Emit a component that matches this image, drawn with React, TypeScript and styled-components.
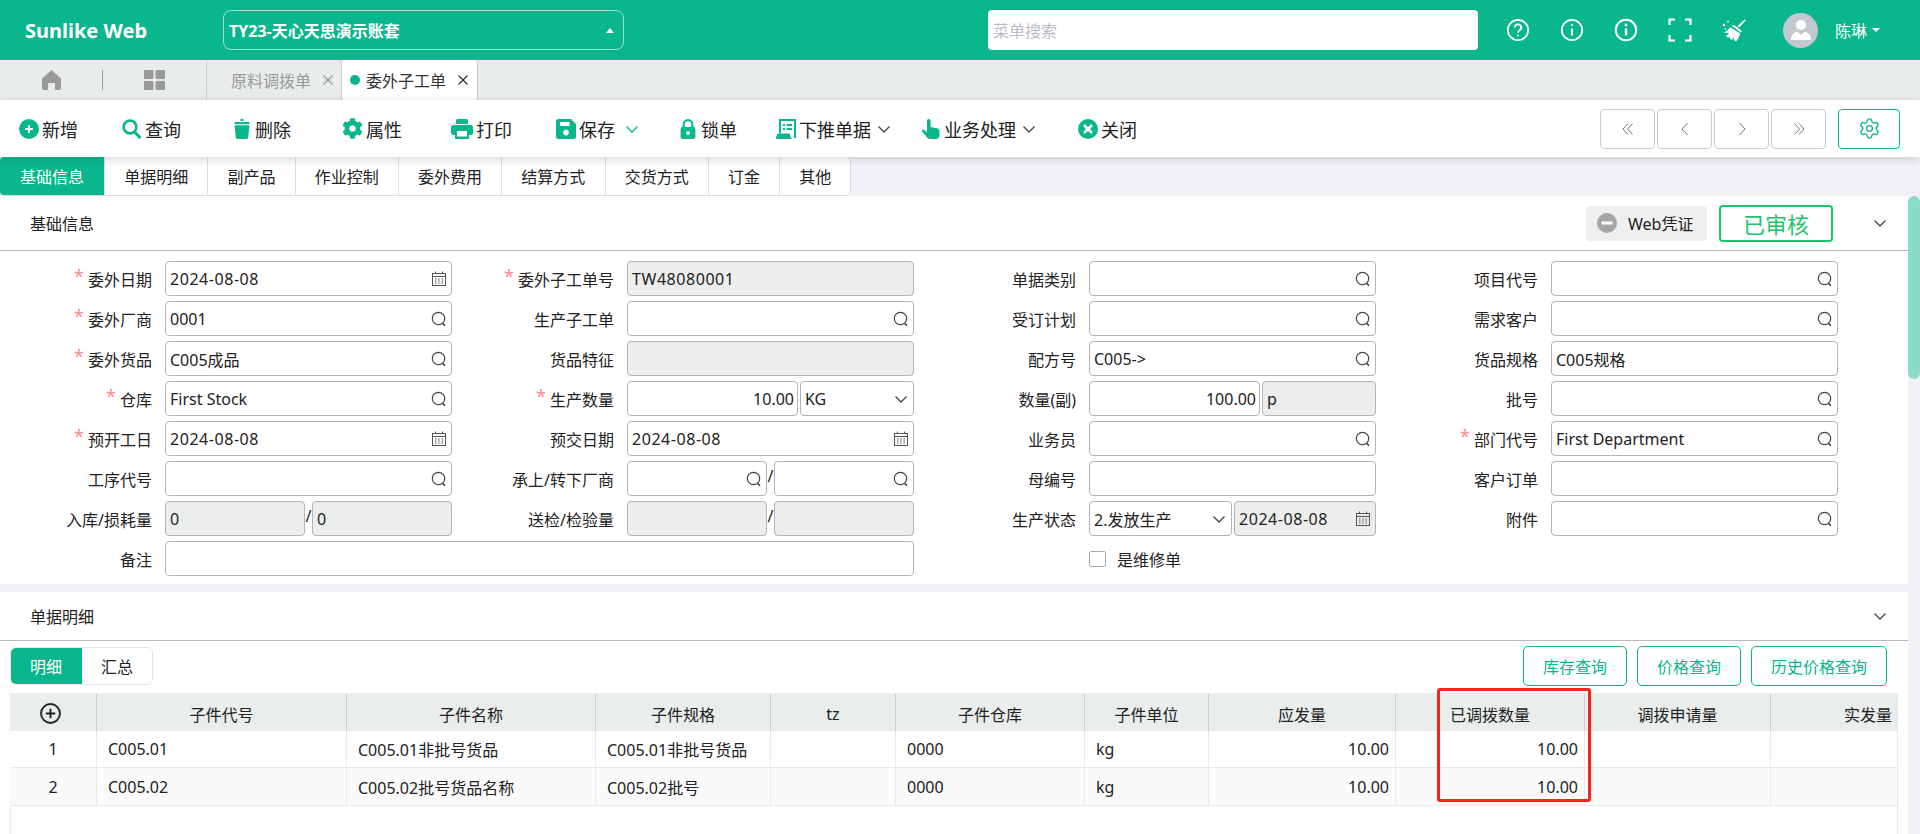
import { FC, ReactNode } from 'react'
import styled, { createGlobalStyle } from 'styled-components'
import { Settings } from 'lucide-react'
import { FaCog } from 'react-icons/fa'

const GREEN = '#0ab68b'

const GlobalStyle = createGlobalStyle`
  html, body {
    margin: 0;
    padding: 0;
    background: #f0f2f5;
  }
  * {
    box-sizing: border-box;
  }
  body {
    font-family: "Noto Sans", "Noto Sans CJK SC", sans-serif;
    font-size: 16px;
    color: #222;
  }
`

/* ---------- small drawings ---------- */

const Chevron: FC<{ color?: string }> = ({ color = '#444' }) => (
  <svg width="16" height="16" viewBox="0 0 16 16" fill="none" stroke={color} strokeWidth="1.3">
    <polyline points="2.5,5.5 8,11 13.5,5.5" />
  </svg>
)

const CloseX: FC<{ color: string }> = ({ color }) => (
  <svg width="10" height="10" viewBox="0 0 10 10" stroke={color} strokeWidth="1.2">
    <line x1="0.5" y1="0.5" x2="9.5" y2="9.5" />
    <line x1="9.5" y1="0.5" x2="0.5" y2="9.5" />
  </svg>
)

const SearchIcon = () => (
  <svg width="16" height="16" viewBox="0 0 16 16" fill="none" stroke="#444" strokeWidth="1.2">
    <circle cx="7.5" cy="7.5" r="6.2" />
    <line x1="11.6" y1="12.4" x2="14" y2="14.6" strokeWidth="1.5" />
  </svg>
)

const CalendarIcon = () => (
  <svg width="16" height="16" viewBox="0 0 16 16" fill="none" stroke="#555" strokeWidth="1">
    <rect x="1.5" y="2.5" width="13" height="12" />
    <line x1="1.5" y1="5.5" x2="14.5" y2="5.5" />
    <line x1="4.5" y1="0.5" x2="4.5" y2="3" />
    <line x1="11.5" y1="0.5" x2="11.5" y2="3" />
    <path d="M4 8h1.5M7.2 8h1.5M10.5 8h1.5M4 10h1.5M7.2 10h1.5M10.5 10h1.5M4 12h1.5M7.2 12h1.5M10.5 12h1.5" />
  </svg>
)

const PagerIcon: FC<{ d: string }> = ({ d }) => (
  <svg width="16" height="16" viewBox="0 0 16 16" fill="none" stroke="#777" strokeWidth="1">
    <path d={d} />
  </svg>
)

const ToolIcons: Record<string, ReactNode> = {
  add: (
    <svg width="20" height="20" viewBox="0 0 20 20">
      <circle cx="10" cy="10" r="10" fill={GREEN} />
      <path d="M6.2 10h7.6M10 6.2v7.6" stroke="#fff" strokeWidth="2" />
    </svg>
  ),
  search: (
    <svg width="20" height="20" viewBox="0 0 20 20" fill="none" stroke={GREEN}>
      <circle cx="8" cy="8" r="6.4" strokeWidth="2.6" />
      <line x1="12.6" y1="13" x2="18.4" y2="19" strokeWidth="3.2" />
    </svg>
  ),
  trash: (
    <svg width="20" height="20" viewBox="0 0 20 20" fill={GREEN}>
      <rect x="8.4" y="0" width="3.4" height="2" rx="0.8" />
      <rect x="2.4" y="3" width="15.2" height="2.2" rx="1" />
      <path d="M2.6 6.2h14.8l-1.2 12.4a1.6 1.6 0 0 1-1.6 1.4H5.4a1.6 1.6 0 0 1-1.6-1.4z" />
    </svg>
  ),
  gear: <FaCog size={21} color={GREEN} />,
  print: (
    <svg width="22" height="20" viewBox="0 0 22 20">
      <path d="M5 1.5a1.5 1.5 0 0 1 1.5-1.5h9A1.5 1.5 0 0 1 17 1.5V5H5z" fill={GREEN} />
      <rect x="0" y="6" width="22" height="10" rx="2.5" fill={GREEN} />
      <rect x="4" y="10.5" width="14" height="9.5" rx="1" fill={GREEN} />
      <rect x="6" y="12" width="10" height="5.5" fill="#fff" />
    </svg>
  ),
  save: (
    <svg width="20" height="20" viewBox="0 0 20 20">
      <path d="M2.5 0h12.5l5 5v12.5a2.5 2.5 0 0 1-2.5 2.5h-15A2.5 2.5 0 0 1 0 17.5v-15A2.5 2.5 0 0 1 2.5 0z" fill={GREEN} />
      <rect x="4" y="3" width="9.5" height="4" fill="#fff" />
      <circle cx="10" cy="13.6" r="2.8" fill="#fff" />
    </svg>
  ),
  lock: (
    <svg width="20" height="20" viewBox="0 0 20 20">
      <path d="M5.6 9V5.6a4.4 4.4 0 0 1 8.8 0V9" fill="none" stroke={GREEN} strokeWidth="2.2" />
      <rect x="2.6" y="8" width="14.8" height="12" rx="2" fill={GREEN} />
      <circle cx="10" cy="14" r="2" fill="#fff" />
    </svg>
  ),
  push: (
    <svg width="20" height="20" viewBox="0 0 20 20">
      <path d="M4 14.5V1h15v18" fill="none" stroke={GREEN} strokeWidth="2" />
      <path d="M7 5h2v2H7zM7 9h2v2H7zM10.5 5H16v2h-5.5zM10.5 9H16v2h-5.5z" fill={GREEN} />
      <path d="M0 20c0-3 1-5 2.5-5.5H14c0 2 .5 4 2 5.500z" fill={GREEN} />
    </svg>
  ),
  hand: (
    <svg width="20" height="20" viewBox="0 0 20 20" fill={GREEN}>
      <path d="M6 1.8a1.8 1.8 0 0 1 3.6 0V8l6.400 1.300c1.500.3 2.500 1.300 2.500 2.800V16c0 2.500-1.500 4-4 4H9c-1.500 0-2.300-.6-3-1.700l-4.800-5.800c-.8-1.200.8-2.800 2-1.600L6 13.200z" />
    </svg>
  ),
  close: (
    <svg width="20" height="20" viewBox="0 0 20 20">
      <circle cx="10" cy="10" r="10" fill={GREEN} />
      <path d="M6 6l8 8M14 6l-8 8" stroke="#fff" strokeWidth="2.6" />
    </svg>
  ),
}

/* ---------- top bar ---------- */

const TopBar = styled.header`
  display: flex;
  align-items: center;
  height: 60px;
  padding-left: 25px;
  background: ${GREEN};
  color: #fff;
`
const Logo = styled.div`
  width: 198px;
  font-size: 20px;
  font-weight: 700;
`
const AccountSelect = styled.div`
  display: flex;
  align-items: center;
  justify-content: space-between;
  width: 401px;
  height: 40px;
  padding: 0 9px 0 5px;
  border: 1px solid rgba(255, 255, 255, 0.6);
  border-radius: 8px;
  font-weight: 700;
`
const Caret = styled.i<{ $up?: boolean }>`
  display: inline-block;
  border-left: 4.5px solid transparent;
  border-right: 4.5px solid transparent;
  ${(p) => (p.$up ? 'border-bottom: 5px solid #fff;' : 'border-top: 4px solid #fff;')}
`
const MenuSearch = styled.div`
  display: flex;
  align-items: center;
  width: 490px;
  height: 40px;
  margin-left: 364px;
  padding-left: 5px;
  border-radius: 4px;
  background: #fff;
  color: #b8bcc4;
`
const HeaderIcons = styled.div`
  display: flex;
  margin-left: 13px;
`
const HeaderIcon = styled.span`
  display: flex;
  align-items: center;
  justify-content: center;
  width: 54px;
  height: 24px;
`
const Avatar = styled.span`
  display: flex;
  align-items: center;
  justify-content: center;
  width: 35px;
  height: 35px;
  margin-left: 22px;
  border-radius: 50%;
  background: #c3c8d0;
`
const UserName = styled.span`
  display: flex;
  align-items: center;
  gap: 5px;
  margin-left: 17px;
`

/* ---------- open document tabs ---------- */

const TabBar = styled.nav`
  display: flex;
  align-items: stretch;
  height: 40px;
  background: #e8ecea;
`
const HomeSlot = styled.div`
  display: flex;
  align-items: center;
  width: 206px;
  padding-left: 42px;
`
const Divider = styled.span`
  width: 1px;
  height: 20px;
  margin: 0 41px;
  background: #999;
`
const DocTab = styled.div<{ $active?: boolean }>`
  display: flex;
  align-items: center;
  width: ${(p) => (p.$active ? 136 : 136)}px;
  padding-left: ${(p) => (p.$active ? 8 : 24)}px;
  border-left: ${(p) => (p.$active ? 'none' : '1px solid #ccc')};
  border-right: 1px solid #ccc;
  border-radius: 4px 4px 0 0;
  background: ${(p) => (p.$active ? '#fff' : 'transparent')};
  color: ${(p) => (p.$active ? '#333' : '#999')};
`
const TabDot = styled.i`
  width: 10px;
  height: 10px;
  margin-right: 6px;
  border-radius: 50%;
  background: ${GREEN};
`
const TabClose = styled.span`
  display: flex;
  margin-left: 12px;
`

/* ---------- toolbar ---------- */

const Toolbar = styled.div`
  position: relative;
  z-index: 2;
  display: flex;
  align-items: center;
  height: 57px;
  padding: 0 20px 0 19px;
  background: #fff;
  box-shadow: 0 2px 8px rgba(40, 44, 60, 0.2);
`
const ToolButton = styled.button<{ $offset: number }>`
  display: flex;
  align-items: center;
  gap: 3px;
  height: 40px;
  margin-left: ${(p) => p.$offset}px;
  padding: 0;
  border: 0;
  background: none;
  color: #222;
  font: inherit;
  font-size: 18px;
`
const ToolChevron = styled.span<{ $gap: number }>`
  display: flex;
  margin-left: ${(p) => p.$gap}px;
`
const Pager = styled.div`
  display: flex;
  gap: 2px;
  margin-left: auto;
`
const PagerButton = styled.button`
  display: flex;
  align-items: center;
  justify-content: center;
  width: 55px;
  height: 40px;
  padding: 0;
  border: 1px solid #ccc;
  border-radius: 4px;
  background: #fff;
`
const GearButton = styled(PagerButton)`
  width: 62px;
  margin-left: 12px;
  border-color: ${GREEN};
`

/* ---------- section tabs ---------- */

const SectionTabs = styled.div`
  display: flex;
  height: 39px;
  padding-bottom: 1px;
`
const SectionTabList = styled.div`
  display: flex;
  border-radius: 4px;
  box-shadow: 0 0 0 1px #dcdee2;
  overflow: hidden;
`
const SectionTab = styled.div<{ $active?: boolean }>`
  display: flex;
  align-items: center;
  padding: 0 ${(p) => (p.$active ? '20px' : '19.15px')};
  border-right: 1px solid #dcdee2;
  background: ${(p) => (p.$active ? GREEN : '#fff')};
  color: ${(p) => (p.$active ? '#fff' : '#222')};
  &:last-child {
    border-right: 0;
  }
`

/* ---------- scroll area ---------- */

const Body = styled.div`
  display: flex;
  height: 638px;
  overflow: hidden;
`
const Content = styled.main`
  display: flex;
  flex-direction: column;
  gap: 8px;
  width: 1908px;
`
const ScrollTrack = styled.div`
  width: 12px;
`
const ScrollThumb = styled.div`
  height: 183px;
  border-radius: 6px;
  background: #8adcc4;
`

const Card = styled.section<{ $grow?: boolean }>`
  display: flex;
  flex-direction: column;
  background: #fff;
  ${(p) => p.$grow && 'flex: 1; min-height: 0;'}
`
const CardHeader = styled.div<{ $height: number }>`
  display: flex;
  align-items: center;
  flex: none;
  height: ${(p) => p.$height}px;
  padding: 0 20px 0 30px;
  border-bottom: 1px solid #b8b8b8;
`
const VoucherBadge = styled.div`
  display: flex;
  align-items: center;
  gap: 11px;
  width: 121px;
  height: 35px;
  margin-left: auto;
  padding-left: 11px;
  border-radius: 4px;
  background: #efefef;
`
const StatusStamp = styled.div`
  display: flex;
  align-items: center;
  justify-content: center;
  width: 114px;
  height: 37px;
  margin-left: 12px;
  border: 2px solid #1cc46c;
  border-radius: 4px;
  color: #1cc46c;
  font-size: 22px;
`
const HeaderChevron = styled.span<{ $auto?: boolean }>`
  display: flex;
  margin-left: ${(p) => (p.$auto ? 'auto' : '39px')};
`

/* ---------- form ---------- */

const Form = styled.div`
  display: grid;
  grid-template-columns: repeat(4, 462px);
  grid-auto-rows: 35px;
  row-gap: 5px;
  padding: 10px 0 8px;
`
const FormItem = styled.div<{ $span?: number }>`
  display: grid;
  grid-template-columns: 152px 1fr;
  column-gap: 13px;
  align-items: center;
  width: ${(p) => (p.$span === 2 ? 914 : 452)}px;
  ${(p) => p.$span === 2 && 'grid-column: span 2;'}
`
const Label = styled.div`
  padding-top: 1px;
  text-align: right;
  white-space: nowrap;
`
const Req = styled.span`
  position: relative;
  top: -3px;
  margin-right: 4px;
  color: #fb8a8a;
  font-size: 18px;
  line-height: 1;
`
const FieldRow = styled.div<{ $first: number }>`
  display: grid;
  grid-template-columns: ${(p) => p.$first}px 1fr;
  column-gap: 2px;
  height: 35px;
`
const SlashRow = styled.div`
  display: grid;
  grid-template-columns: 1fr 7px 1fr;
  height: 35px;
`
const Slash = styled.span`
  text-align: center;
  line-height: 30px;
`
const Field = styled.div<{ $disabled?: boolean; $right?: boolean; $wide?: boolean }>`
  display: flex;
  align-items: center;
  justify-content: space-between;
  height: 35px;
  min-width: 0;
  padding: 1px 4px 0 4px;
  border: 1px solid #b4b4b4;
  border-radius: 4px;
  background: ${(p) => (p.$disabled ? '#eceeed' : '#fff')};
  letter-spacing: ${(p) => (p.$wide ? '0.55px' : 'normal')};
  ${(p) => p.$right && 'justify-content: flex-end; padding-right: 3px;'}
`
const CheckRow = styled.div`
  display: flex;
  align-items: center;
  gap: 11px;
  margin-left: 165px;
`
const CheckBox = styled.span`
  width: 17px;
  height: 16px;
  border: 1px solid #aaa;
  border-radius: 2px;
  background: #fff;
`

/* ---------- detail table ---------- */

const DetailBar = styled.div`
  display: flex;
  align-items: center;
  flex: none;
  height: 40px;
  margin-top: 5px;
  padding: 0 21px 0 10px;
`
const Segmented = styled.div`
  display: flex;
  height: 38px;
  border: 1px solid #e4e6ea;
  border-radius: 6px;
  overflow: hidden;
`
const Segment = styled.div<{ $active?: boolean }>`
  display: flex;
  align-items: center;
  justify-content: center;
  width: ${(p) => (p.$active ? 72 : 70)}px;
  margin: ${(p) => (p.$active ? '-1px 0 -1px -1px' : '0')};
  background: ${(p) => (p.$active ? GREEN : '#fff')};
  color: ${(p) => (p.$active ? '#fff' : '#222')};
`
const ActionButton = styled.button<{ $first?: boolean }>`
  height: 40px;
  margin-left: ${(p) => (p.$first ? 'auto' : '10px')};
  padding: 0 19px;
  border: 1px solid ${GREEN};
  border-radius: 5px;
  background: #fff;
  color: ${GREEN};
  font: inherit;
`
const TableWrap = styled.div`
  position: relative;
  display: flex;
  flex-direction: column;
  flex: 1;
  margin: 7px 10px 0;
  border-right: 1px solid #e8eaec;
  border-left: 1px solid #e8eaec;
`
const COLUMN_TEMPLATE = '87px 250px 249px 175px 125px 189px 124px 187px 189px 186px 127px'

const HeadRow = styled.div`
  display: grid;
  grid-template-columns: ${COLUMN_TEMPLATE};
  height: 38px;
  margin-left: -1px;
  background: #e9edeb;
`
const HeadCell = styled.div<{ $align?: string; $inset?: boolean }>`
  display: flex;
  align-items: center;
  justify-content: ${(p) => p.$align || 'center'};
  margin: 1px 0 0;
  padding: 2px ${(p) => (p.$inset ? '6px' : '0')} 0 0;
  border-right: 1px solid #c9cede;
  white-space: nowrap;
  &:last-child {
    border-right: 0;
  }
`
const BodyRow = styled.div<{ $even?: boolean; $height: number }>`
  display: grid;
  grid-template-columns: ${COLUMN_TEMPLATE};
  height: ${(p) => p.$height}px;
  margin-left: -1px;
  border-bottom: 1px solid #e8eaec;
  background: ${(p) => (p.$even ? '#fafafa' : '#fff')};
`
const BodyCell = styled.div<{ $align?: string }>`
  display: flex;
  align-items: center;
  justify-content: ${(p) => p.$align || 'flex-start'};
  padding: 0 ${(p) => (p.$align === 'flex-end' ? '6px' : p.$align === 'center' ? '0' : '11px')} 0
    ${(p) => (p.$align === 'center' ? '0' : '11px')};
  border-right: 1px solid #e8eaec;
  white-space: nowrap;
  &:last-child {
    border-right: 0;
  }
`
const Highlight = styled.div`
  position: absolute;
  top: -5px;
  left: 1426px;
  width: 154px;
  height: 114px;
  border: 3px solid #f6231f;
  border-radius: 3px;
  pointer-events: none;
`

/* ---------- data ---------- */

const toolItems = [
  { label: '新增', icon: 'add', offset: 0 },
  { label: '查询', icon: 'search', offset: 44 },
  { label: '删除', icon: 'trash', offset: 51 },
  { label: '属性', icon: 'gear', offset: 51 },
  { label: '打印', icon: 'print', offset: 49 },
  { label: '保存', icon: 'save', offset: 44, chevron: GREEN, chevronGap: 6 },
  { label: '锁单', icon: 'lock', offset: 38 },
  { label: '下推单据', icon: 'push', offset: 39, chevron: '#444', chevronGap: 2 },
  { label: '业务处理', icon: 'hand', offset: 29, chevron: '#444', chevronGap: 2 },
  { label: '关闭', icon: 'close', offset: 41 },
]

const sectionTabs = ['基础信息', '单据明细', '副产品', '作业控制', '委外费用', '结算方式', '交货方式', '订金', '其他']

const pagerPaths = [
  'M8 2.5L3 8l5 5.5M12.5 2.5L7.5 8l5 5.5',
  'M10.5 2L5 8l5.5 6',
  'M5.5 2L11 8l-5.5 6',
  'M3.5 2.5L8.5 8l-5 5.5M8 2.5L13 8l-5 5.5',
]

const columns = [
  { title: '', cell: 'center' },
  { title: '子件代号' },
  { title: '子件名称' },
  { title: '子件规格' },
  { title: 'tz' },
  { title: '子件仓库' },
  { title: '子件单位' },
  { title: '应发量', cell: 'flex-end' },
  { title: '已调拨数量', cell: 'flex-end' },
  { title: '调拨申请量', cell: 'flex-end' },
  { title: '实发量', head: 'flex-end', cell: 'flex-end' },
]

const rows = [
  ['1', 'C005.01', 'C005.01非批号货品', 'C005.01非批号货品', '', '0000', 'kg', '10.00', '10.00', '', ''],
  ['2', 'C005.02', 'C005.02批号货品名称', 'C005.02批号', '', '0000', 'kg', '10.00', '10.00', '', ''],
]

type IconKind = 'search' | 'date' | 'select'

const FieldIcon: FC<{ kind?: IconKind }> = ({ kind }) => {
  if (kind === 'search') return <SearchIcon />
  if (kind === 'date') return <CalendarIcon />
  if (kind === 'select') return <Chevron />
  return null
}

const Item: FC<{ label: string; required?: boolean; span?: number; children: ReactNode }> = ({
  label,
  required,
  span,
  children,
}) => (
  <FormItem $span={span}>
    <Label>
      {required && <Req>*</Req>}
      {label}
    </Label>
    {children}
  </FormItem>
)

const Input: FC<{ value?: string; icon?: IconKind; disabled?: boolean; right?: boolean; wide?: boolean }> = ({
  value,
  icon,
  disabled,
  right,
  wide,
}) => (
  <Field $disabled={disabled} $right={right} $wide={wide}>
    <span>{value}</span>
    <FieldIcon kind={icon} />
  </Field>
)

const App: FC = () => (
  <>
    <GlobalStyle />
    <TopBar>
      <Logo>Sunlike Web</Logo>
      <AccountSelect>
        TY23-天心天思演示账套
        <Caret $up />
      </AccountSelect>
      <MenuSearch>菜单搜索</MenuSearch>
      <HeaderIcons>
        <HeaderIcon>
          <svg width="24" height="24" viewBox="0 0 24 24" fill="none" stroke="#fff" strokeWidth="1.8">
            <circle cx="12" cy="12" r="10.2" />
            <path d="M8.8 9.6a3.2 3.2 0 1 1 4.8 2.7c-1 .6-1.6 1.2-1.6 2.5" />
            <circle cx="12" cy="17.5" r="1" fill="#fff" stroke="none" />
          </svg>
        </HeaderIcon>
        <HeaderIcon>
          <svg width="24" height="24" viewBox="0 0 24 24" fill="none" stroke="#fff" strokeWidth="1.8">
            <circle cx="12" cy="12" r="10.2" />
            <path d="M12 10.5v7" />
            <circle cx="12" cy="7" r="1.1" fill="#fff" stroke="none" />
          </svg>
        </HeaderIcon>
        <HeaderIcon>
          <svg width="24" height="24" viewBox="0 0 24 24" fill="none" stroke="#fff" strokeWidth="2">
            <circle cx="12" cy="12" r="10.2" />
            <path d="M12 10.5v7" strokeWidth="2.4" />
            <circle cx="12" cy="7" r="1.4" fill="#fff" stroke="none" />
          </svg>
        </HeaderIcon>
        <HeaderIcon>
          <svg width="24" height="24" viewBox="0 0 24 24" fill="none" stroke="#fff" strokeWidth="2.2">
            <path d="M1.5 7V1.5H7M17 1.5h5.5V7M22.5 17v5.5H17M7 22.5H1.5V17" />
          </svg>
        </HeaderIcon>
        <HeaderIcon>
          <svg width="24" height="24" viewBox="0 0 24 24" fill="#fff">
            <path d="M22.8 1.2l1 1-6.6 7.200-1.600-1.400z" />
            <path d="M13 7.400l6.500 5.300c.2.600 0 1.200-.5 1.800L9.500 7.800c1-.5 2.400-.8 3.500-.4z" />
            <path d="M8 9.200l10.300 6.400c-.9 3.200-2.300 5.700-4.300 8l-2-1.500-.4-3-1.500 3-2-1.300-.4-2.300-1.200 1.500-2.800-2.200c-.1-.3 2-.5 3.300-2.600L1.500 14.500C4 13.800 6.600 12 8 9.200z" />
            <circle cx="2" cy="7" r="1.200" />
            <circle cx="6" cy="3.500" r="0.900" />
            <circle cx="3.200" cy="11" r="0.800" />
          </svg>
        </HeaderIcon>
      </HeaderIcons>
      <Avatar>
        <svg width="22" height="22" viewBox="0 0 22 22" fill="#fff">
          <circle cx="11" cy="6" r="5" />
          <path d="M1 21c0-4 1.5-7 6-8.300l4 3 4-3c4.500 1.300 6 4.300 6 8.300z" />
        </svg>
      </Avatar>
      <UserName>
        陈琳
        <Caret />
      </UserName>
    </TopBar>

    <TabBar>
      <HomeSlot>
        <svg width="19" height="20" viewBox="0 0 19 20" fill="#999">
          <path d="M9.500 0L19 8.500V18a2 2 0 0 1-2 2h-4v-7H6v7H2a2 2 0 0 1-2-2V8.500z" />
        </svg>
        <Divider />
        <svg width="21" height="20" viewBox="0 0 21 20" fill="#999">
          <rect width="9.5" height="9" rx="1" />
          <rect x="11.5" width="9.5" height="9" rx="1" />
          <rect y="11" width="9.5" height="9" rx="1" />
          <rect x="11.5" y="11" width="9.5" height="9" rx="1" />
        </svg>
      </HomeSlot>
      <DocTab>
        原料调拨单
        <TabClose>
          <CloseX color="#999" />
        </TabClose>
      </DocTab>
      <DocTab $active>
        <TabDot />
        委外子工单
        <TabClose>
          <CloseX color="#333" />
        </TabClose>
      </DocTab>
    </TabBar>

    <Toolbar>
      {toolItems.map((t) => (
        <ToolButton key={t.label} $offset={t.offset}>
          {ToolIcons[t.icon]}
          {t.label}
          {t.chevron && (
            <ToolChevron $gap={t.chevronGap ?? 0}>
              <Chevron color={t.chevron} />
            </ToolChevron>
          )}
        </ToolButton>
      ))}
      <Pager>
        {pagerPaths.map((d) => (
          <PagerButton key={d}>
            <PagerIcon d={d} />
          </PagerButton>
        ))}
      </Pager>
      <GearButton>
        <Settings size={23} color={GREEN} strokeWidth={1.4} />
      </GearButton>
    </Toolbar>

    <SectionTabs>
      <SectionTabList>
        {sectionTabs.map((t, i) => (
          <SectionTab key={t} $active={i === 0}>
            {t}
          </SectionTab>
        ))}
      </SectionTabList>
    </SectionTabs>

    <Body>
      <Content>
        <Card>
          <CardHeader $height={55}>
            基础信息
            <VoucherBadge>
              <svg width="20" height="20" viewBox="0 0 20 20">
                <circle cx="10" cy="10" r="10" fill="#a5a5a5" />
                <rect x="4.5" y="8.5" width="11" height="3" fill="#fff" />
              </svg>
              Web凭证
            </VoucherBadge>
            <StatusStamp>已审核</StatusStamp>
            <HeaderChevron>
              <Chevron />
            </HeaderChevron>
          </CardHeader>
          <Form>
            <Item label="委外日期" required>
              <Input value="2024-08-08" icon="date" wide />
            </Item>
            <Item label="委外子工单号" required>
              <Input value="TW48080001" disabled wide />
            </Item>
            <Item label="单据类别">
              <Input icon="search" />
            </Item>
            <Item label="项目代号">
              <Input icon="search" />
            </Item>

            <Item label="委外厂商" required>
              <Input value="0001" icon="search" />
            </Item>
            <Item label="生产子工单">
              <Input icon="search" />
            </Item>
            <Item label="受订计划">
              <Input icon="search" />
            </Item>
            <Item label="需求客户">
              <Input icon="search" />
            </Item>

            <Item label="委外货品" required>
              <Input value="C005成品" icon="search" />
            </Item>
            <Item label="货品特征">
              <Input disabled />
            </Item>
            <Item label="配方号">
              <Input value="C005->" icon="search" />
            </Item>
            <Item label="货品规格">
              <Input value="C005规格" />
            </Item>

            <Item label="仓库" required>
              <Input value="First Stock" icon="search" />
            </Item>
            <Item label="生产数量" required>
              <FieldRow $first={171}>
                <Input value="10.00" right />
                <Input value="KG" icon="select" />
              </FieldRow>
            </Item>
            <Item label="数量(副)">
              <FieldRow $first={171}>
                <Input value="100.00" right />
                <Input value="p" disabled />
              </FieldRow>
            </Item>
            <Item label="批号">
              <Input icon="search" />
            </Item>

            <Item label="预开工日" required>
              <Input value="2024-08-08" icon="date" wide />
            </Item>
            <Item label="预交日期">
              <Input value="2024-08-08" icon="date" wide />
            </Item>
            <Item label="业务员">
              <Input icon="search" />
            </Item>
            <Item label="部门代号" required>
              <Input value="First Department" icon="search" />
            </Item>

            <Item label="工序代号">
              <Input icon="search" />
            </Item>
            <Item label="承上/转下厂商">
              <SlashRow>
                <Input icon="search" />
                <Slash>/</Slash>
                <Input icon="search" />
              </SlashRow>
            </Item>
            <Item label="母编号">
              <Input />
            </Item>
            <Item label="客户订单">
              <Input />
            </Item>

            <Item label="入库/损耗量">
              <SlashRow>
                <Input value="0" disabled />
                <Slash>/</Slash>
                <Input value="0" disabled />
              </SlashRow>
            </Item>
            <Item label="送检/检验量">
              <SlashRow>
                <Input disabled />
                <Slash>/</Slash>
                <Input disabled />
              </SlashRow>
            </Item>
            <Item label="生产状态">
              <FieldRow $first={143}>
                <Input value="2.发放生产" icon="select" />
                <Input value="2024-08-08" icon="date" disabled wide />
              </FieldRow>
            </Item>
            <Item label="附件">
              <Input icon="search" />
            </Item>

            <Item label="备注" span={2}>
              <Input />
            </Item>
            <CheckRow>
              <CheckBox />
              是维修单
            </CheckRow>
          </Form>
        </Card>

        <Card $grow>
          <CardHeader $height={49}>
            单据明细
            <HeaderChevron $auto>
              <Chevron />
            </HeaderChevron>
          </CardHeader>
          <DetailBar>
            <Segmented>
              <Segment $active>明细</Segment>
              <Segment>汇总</Segment>
            </Segmented>
            <ActionButton $first>库存查询</ActionButton>
            <ActionButton>价格查询</ActionButton>
            <ActionButton>历史价格查询</ActionButton>
          </DetailBar>
          <TableWrap>
            <HeadRow>
              {columns.map((c, i) => (
                <HeadCell key={i} $align={c.head} $inset={i === 0 || !!c.head}>
                  {i === 0 ? (
                    <svg width="21" height="21" viewBox="0 0 20 20" fill="none" stroke="#222" strokeWidth="1.8">
                      <circle cx="10" cy="10" r="9" />
                      <path d="M5.5 10h9M10 5.5v9" />
                    </svg>
                  ) : (
                    c.title
                  )}
                </HeadCell>
              ))}
            </HeadRow>
            {rows.map((row, r) => (
              <BodyRow key={row[0]} $even={r === 1} $height={r === 0 ? 37 : 38}>
                {row.map((v, i) => (
                  <BodyCell key={i} $align={columns[i].cell}>
                    {v}
                  </BodyCell>
                ))}
              </BodyRow>
            ))}
            <Highlight />
          </TableWrap>
        </Card>
      </Content>
      <ScrollTrack>
        <ScrollThumb />
      </ScrollTrack>
    </Body>
  </>
)

export default App
